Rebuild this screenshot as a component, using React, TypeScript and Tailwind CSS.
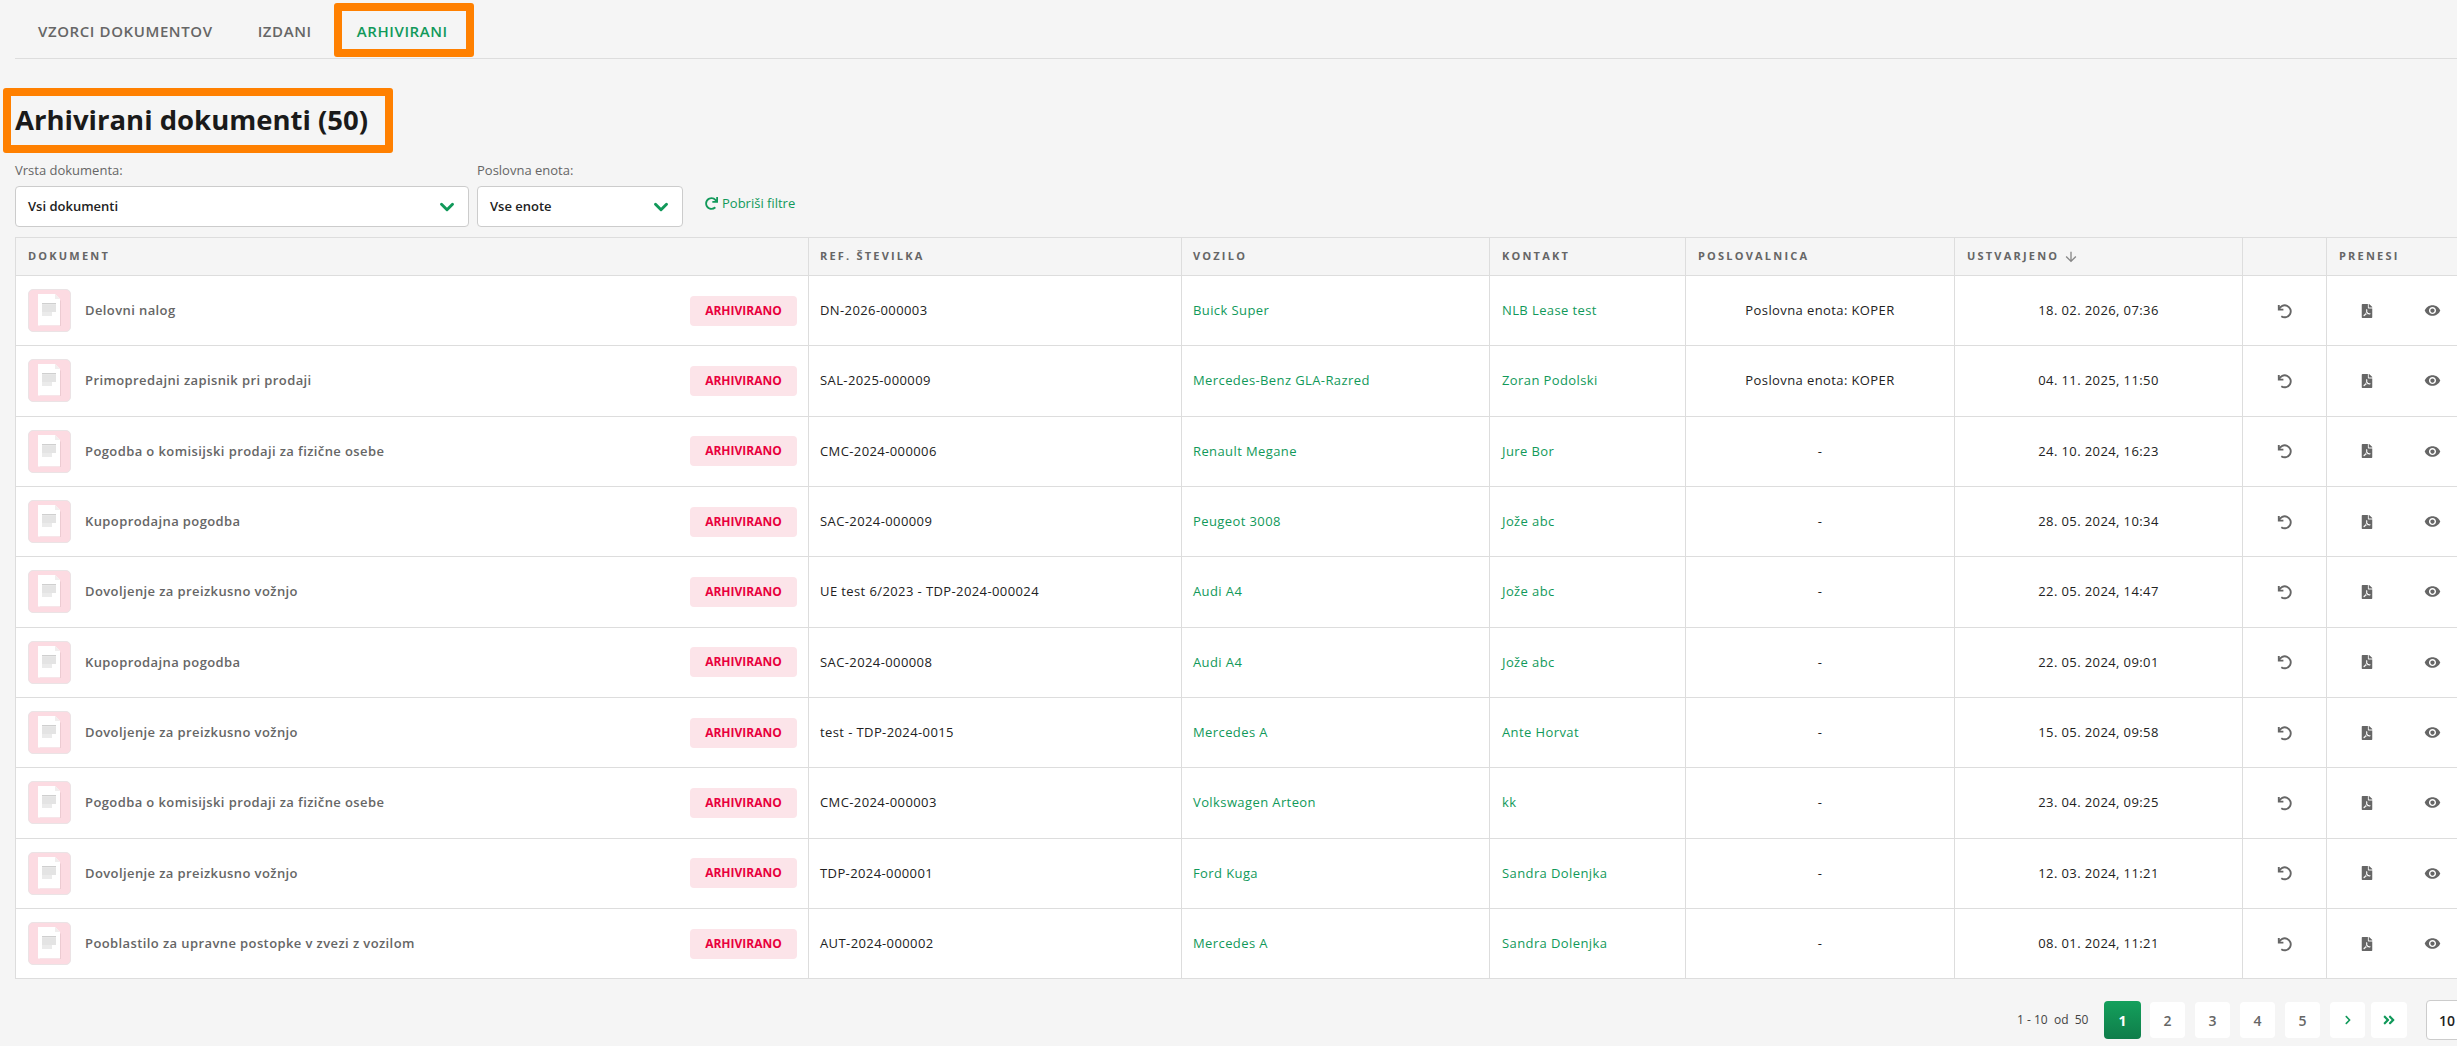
import { MdArrowDownward, MdVisibility } from "react-icons/md";
import { FaFilePdf, FaChevronRight, FaAngleDoubleRight, FaRedo } from "react-icons/fa";
import { ChevronDown } from "lucide-react";

const rows = [
  ["Delovni nalog", "DN-2026-000003", "Buick Super", "NLB Lease test", "Poslovna enota: KOPER", "18. 02. 2026, 07:36"],
  ["Primopredajni zapisnik pri prodaji", "SAL-2025-000009", "Mercedes-Benz GLA-Razred", "Zoran Podolski", "Poslovna enota: KOPER", "04. 11. 2025, 11:50"],
  ["Pogodba o komisijski prodaji za fizične osebe", "CMC-2024-000006", "Renault Megane", "Jure Bor", "-", "24. 10. 2024, 16:23"],
  ["Kupoprodajna pogodba", "SAC-2024-000009", "Peugeot 3008", "Jože abc", "-", "28. 05. 2024, 10:34"],
  ["Dovoljenje za preizkusno vožnjo", "UE test 6/2023 - TDP-2024-000024", "Audi A4", "Jože abc", "-", "22. 05. 2024, 14:47"],
  ["Kupoprodajna pogodba", "SAC-2024-000008", "Audi A4", "Jože abc", "-", "22. 05. 2024, 09:01"],
  ["Dovoljenje za preizkusno vožnjo", "test - TDP-2024-0015", "Mercedes A", "Ante Horvat", "-", "15. 05. 2024, 09:58"],
  ["Pogodba o komisijski prodaji za fizične osebe", "CMC-2024-000003", "Volkswagen Arteon", "kk", "-", "23. 04. 2024, 09:25"],
  ["Dovoljenje za preizkusno vožnjo", "TDP-2024-000001", "Ford Kuga", "Sandra Dolenjka", "-", "12. 03. 2024, 11:21"],
  ["Pooblastilo za upravne postopke v zvezi z vozilom", "AUT-2024-000002", "Mercedes A", "Sandra Dolenjka", "-", "08. 01. 2024, 11:21"],
];

function DocIcon() {
  return (
    <div className="flex h-[43px] w-[43px] shrink-0 items-center justify-center rounded-[5px] border border-[#ebe3e5] bg-[#fcdbe2]">
      <svg width="24" height="33" viewBox="0 0 24 33">
        <path d="M2 2h16l5 5v25H2z" fill="#eccbd2" />
        <path d="M0 0h17l5 5v26.500H0z" fill="#ffffff" />
        <path d="M17 0l5 5h-5z" fill="#f1eeee" />
        <rect x="4" y="9" width="14" height="1.500" fill="#cfcfcf" />
        <rect x="4" y="11" width="14" height="7" fill="#e4e4e4" />
        <rect x="4" y="18" width="10" height="4" fill="#ebebeb" />
      </svg>
    </div>
  );
}

function RestoreIcon() {
  return (
    <svg width="16" height="16" viewBox="0 0 16 16" fill="none" stroke="#666666" strokeWidth="1.900" className="mx-auto">
      <path d="M1.800 2v4.600h4.600" />
      <path d="M2 6.500A6 6 0 1 1 4.300 13.200" />
    </svg>
  );
}

function Th({ children, className = "" }: { children?: React.ReactNode; className?: string }) {
  return (
    <th className={`border border-[#dddddd] bg-[#f5f5f5] px-3 text-left align-middle text-[11px] font-bold tracking-[0.2em] whitespace-nowrap text-[#666666] ${className}`}>
      {children}
    </th>
  );
}

function Td({ children, className = "" }: { children?: React.ReactNode; className?: string }) {
  return <td className={`h-[70.33px] border border-[#dddddd] px-3 align-middle text-[13px] tracking-[0.4px] whitespace-nowrap ${className}`}>{children}</td>;
}

function Select({ label, value, className }: { label: string; value: string; className: string }) {
  return (
    <div className={className}>
      <div className="mb-[7px] text-[13px] leading-[18px] text-[#666666]">{label}</div>
      <div className="flex h-[41px] items-center justify-between rounded-[4px] border border-[#cccccc] bg-white pr-[10px] pl-3 text-[13px] font-semibold text-[#222222]">
        <span>{value}</span>
        <ChevronDown size={22} strokeWidth={3.2} className="text-[#11995a]" />
      </div>
    </div>
  );
}

function PageBtn({ children }: { children: React.ReactNode }) {
  return <div className="flex h-9 w-[35px] items-center justify-center rounded-[4px] bg-white text-[14px] font-semibold text-[#666666]">{children}</div>;
}

export default function App() {
  return (
    <div className="h-[1046px] w-[2457px] overflow-hidden bg-[#f5f5f5] font-['Open_Sans',sans-serif] text-[#222222]">
      <div className="w-[2520px] pl-[15px]">
        <div className="mr-[63px] flex h-[59px] items-center gap-[45px] border-b border-[#dddddd] pt-[4px] pl-[23px] text-[15px] font-semibold tracking-[0.6px]">
          <span className="text-[#666666]">VZORCI DOKUMENTOV</span>
          <span className="text-[#666666]">IZDANI</span>
          <span className="relative text-[#11995a]">
            ARHIVIRANI
            <span className="absolute -top-[17px] -right-[26px] -bottom-[15px] -left-[23px] rounded-[3px] border-[8px] border-[#ff8000]" />
          </span>
        </div>

        <div className="relative mt-[41px] mb-[21px] h-[40px] text-[27.5px] leading-[40px] font-bold text-[#1a1a1a]">
          Arhivirani dokumenti (50)
          <span className="absolute -top-[12px] -bottom-[13px] -left-[12px] w-[390px] rounded-[3px] border-[8px] border-[#ff8000]" />
        </div>

        <div className="flex items-end">
          <Select label="Vrsta dokumenta:" value="Vsi dokumenti" className="w-[454px]" />
          <Select label="Poslovna enota:" value="Vse enote" className="ml-2 w-[206px]" />
          <div className="ml-[22px] flex items-center gap-1 pb-[14px] text-[13px] text-[#11995a]">
            <FaRedo className="text-[13px]" />
            <span>Pobriši filtre</span>
          </div>
        </div>

        <table className="mt-[10px] w-[2444px] table-fixed border-collapse">
          <colgroup>
            <col className="w-[793px]" />
            <col className="w-[373px]" />
            <col className="w-[308px]" />
            <col className="w-[196px]" />
            <col className="w-[269px]" />
            <col className="w-[288px]" />
            <col className="w-[84px]" />
            <col className="w-[80px]" />
            <col className="w-[53px]" />
          </colgroup>
          <thead>
            <tr className="h-[38px]">
              <Th>DOKUMENT</Th>
              <Th className="pl-[11px]">REF. ŠTEVILKA</Th>
              <Th className="pl-[11px]">VOZILO</Th>
              <Th>KONTAKT</Th>
              <Th>POSLOVALNICA</Th>
              <Th>
                <span className="inline-flex items-center gap-1">
                  USTVARJENO <MdArrowDownward className="text-[16px] text-[#888888]" />
                </span>
              </Th>
              <Th />
              <Th className="border-r-0">PRENESI</Th>
              <Th className="border-l-0" />
            </tr>
          </thead>
          <tbody className="bg-white">
            {rows.map((r) => (
              <tr key={r[1]}>
                <Td className="pr-[11px]">
                  <div className="flex items-center">
                    <DocIcon />
                    <span className="ml-[14px] font-semibold text-[#666666]">{r[0]}</span>
                    <span className="ml-auto flex h-[30px] w-[107px] items-center justify-center rounded-[4px] bg-[#fce4e9] text-[12px] font-bold tracking-normal text-[#e8003d]">ARHIVIRANO</span>
                  </div>
                </Td>
                <Td className="pl-[11px] text-[#222222]">{r[1]}</Td>
                <Td className="pl-[11px] text-[#11995a]">{r[2]}</Td>
                <Td className="text-[#11995a]">{r[3]}</Td>
                <Td className="text-center text-[#222222]">{r[4]}</Td>
                <Td className="text-center text-[#222222]">{r[5]}</Td>
                <Td className="text-center">
                  <RestoreIcon />
                </Td>
                <Td className="border-r-0 text-center">
                  <FaFilePdf className="mx-auto text-[14px] text-[#666666]" />
                </Td>
                <Td className="border-l-0 text-center">
                  <MdVisibility className="mx-auto text-[17px] text-[#666666]" />
                </Td>
              </tr>
            ))}
          </tbody>
        </table>

        <div className="mt-[21px] ml-[2002px] flex items-center">
          <span className="w-[87px] text-[12px] text-[#444444]">1 - 10 &nbsp;od &nbsp;50</span>
          <div className="flex h-[38px] w-[37px] items-center justify-center rounded-[4px] bg-gradient-to-b from-[#14a05c] to-[#0f7d4a] text-[14px] font-bold text-white">1</div>
          <div className="ml-[9px] flex items-center gap-[10px]">
            <PageBtn>2</PageBtn>
            <PageBtn>3</PageBtn>
            <PageBtn>4</PageBtn>
            <PageBtn>5</PageBtn>
            <PageBtn><FaChevronRight className="text-[10px] text-[#11995a]" /></PageBtn>
          </div>
          <div className="ml-[6px] flex h-9 w-9 items-center justify-center rounded-[4px] bg-white">
            <FaAngleDoubleRight className="text-[14px] text-[#11995a]" />
          </div>
          <div className="ml-[19px] flex h-10 w-[70px] items-center rounded-[4px] border border-[#cccccc] bg-white pl-3 text-[14px] font-semibold text-[#222222]">10</div>
        </div>
      </div>
    </div>
  );
}
